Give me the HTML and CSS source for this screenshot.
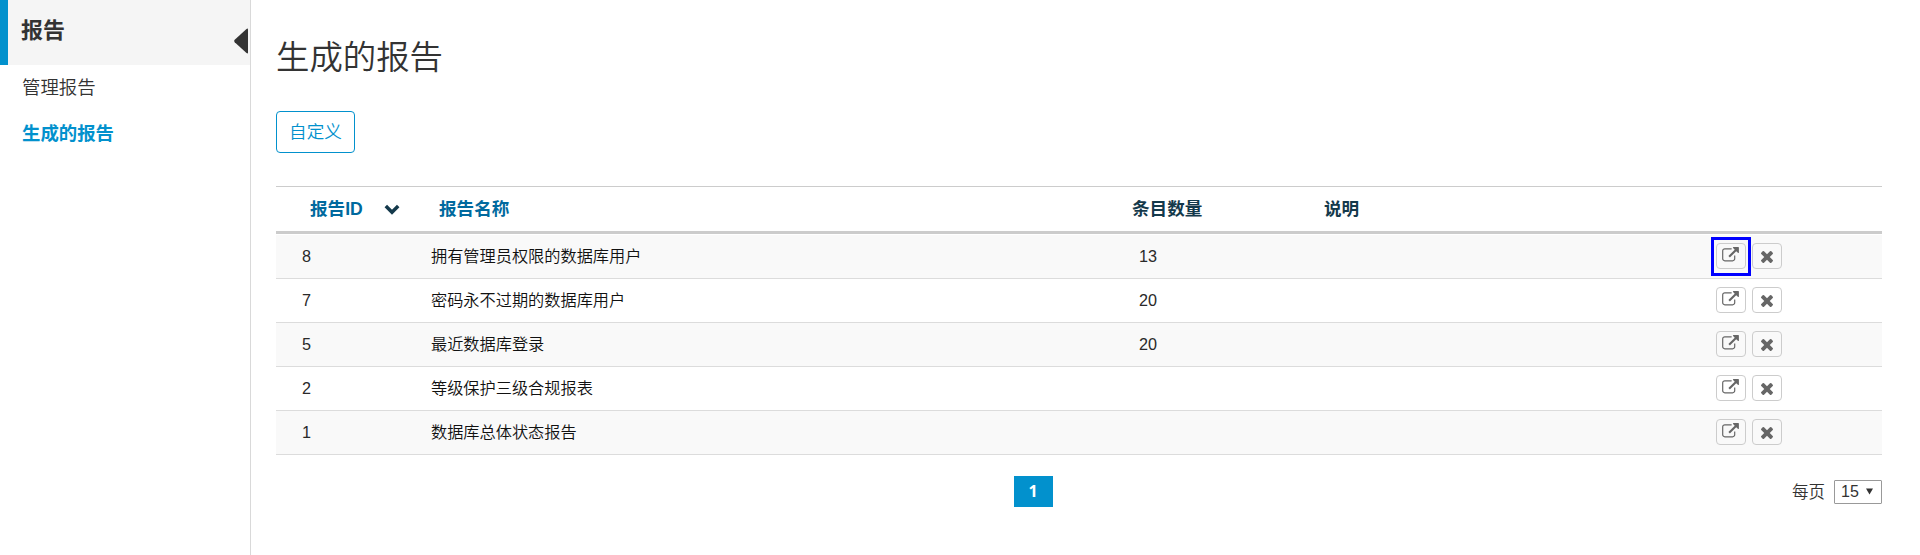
FILE: index.html
```html
<!DOCTYPE html>
<html lang="zh-CN">
<head>
<meta charset="utf-8">
<title>生成的报告</title>
<link rel="stylesheet" href="styles.css">
</head>
<body>
<svg class="defs" aria-hidden="true">
  <symbol id="open" viewBox="0 0 1792 1600"><path d="M1408 928v320q0 119-84.5 203.5t-203.5 84.5h-832q-119 0-203.5-84.5t-84.5-203.5v-832q0-119 84.5-203.5t203.5-84.5h704q14 0 23 9t9 23v64q0 14-9 23t-23 9h-704q-66 0-113 47t-47 113v832q0 66 47 113t113 47h832q66 0 113-47t47-113v-320q0-14 9-23t23-9h64q14 0 23 9t9 23zm384-864v512q0 26-19 45t-45 19-45-19l-176-176-652 652q-10 10-23 10t-23-10l-114-114q-10-10-10-23t10-23l652-652-176-176q-19-19-19-45t19-45 45-19h512q26 0 45 19t19 45z"/></symbol>
  <symbol id="remove" viewBox="302 366 1188 1188"><path d="M1490 1322q0 40-28 68l-136 136q-28 28-68 28t-68-28l-294-294-294 294q-28 28-68 28t-68-28l-136-136q-28-28-28-68t28-68l294-294-294-294q-28-28-28-68t28-68l136-136q28-28 68-28t68 28l294 294 294-294q28-28 68-28t68 28l136 136q28 28 28 68t-28 68l-294 294 294 294q28 28 28 68z"/></symbol>
</svg>
<div class="app">
  <aside class="sidebar">
    <div class="sidebar-head">
      <h2 class="sidebar-title">报告</h2>
      <svg class="collapse" viewBox="0 0 14 26"><path d="M14 1.500V24.500Q14 26 12.500 25L.7 14.200Q-.3 13 .7 11.800L12.500 1Q14 0 14 1.500z"/></svg>
    </div>
    <nav class="menu">
      <a class="menu-item">管理报告</a>
      <a class="menu-item active">生成的报告</a>
    </nav>
  </aside>
  <main class="content">
    <h1 class="title">生成的报告</h1>
    <button class="customize">自定义</button>
    <div class="table">
      <div class="row head">
        <div class="cell id link"><span class="id-label">报告ID</span><svg class="sort" viewBox="0 0 16 11"><path d="M1.800 2 8 8.200 14.200 2"/></svg></div>
        <div class="cell link">报告名称</div>
        <div class="cell count">条目数量</div>
        <div class="cell">说明</div>
        <div class="cell"></div>
      </div>
      <div class="row odd">
        <div class="cell id">8</div><div class="cell">拥有管理员权限的数据库用户</div><div class="cell count">13</div><div class="cell"></div>
        <div class="cell actions"><span class="action marked"><svg class="open"><use href="#open"/></svg></span><span class="action"><svg class="remove"><use href="#remove"/></svg></span></div>
      </div>
      <div class="row">
        <div class="cell id">7</div><div class="cell">密码永不过期的数据库用户</div><div class="cell count">20</div><div class="cell"></div>
        <div class="cell actions"><span class="action"><svg class="open"><use href="#open"/></svg></span><span class="action"><svg class="remove"><use href="#remove"/></svg></span></div>
      </div>
      <div class="row odd">
        <div class="cell id">5</div><div class="cell">最近数据库登录</div><div class="cell count">20</div><div class="cell"></div>
        <div class="cell actions"><span class="action"><svg class="open"><use href="#open"/></svg></span><span class="action"><svg class="remove"><use href="#remove"/></svg></span></div>
      </div>
      <div class="row">
        <div class="cell id">2</div><div class="cell">等级保护三级合规报表</div><div class="cell count"></div><div class="cell"></div>
        <div class="cell actions"><span class="action"><svg class="open"><use href="#open"/></svg></span><span class="action"><svg class="remove"><use href="#remove"/></svg></span></div>
      </div>
      <div class="row odd">
        <div class="cell id">1</div><div class="cell">数据库总体状态报告</div><div class="cell count"></div><div class="cell"></div>
        <div class="cell actions"><span class="action"><svg class="open"><use href="#open"/></svg></span><span class="action"><svg class="remove"><use href="#remove"/></svg></span></div>
      </div>
    </div>
    <div class="pager">
      <span class="page">1</span>
      <div class="per-page"><span class="per-label">每页</span><span class="select">15<svg class="caret" viewBox="0 0 8 7"><path d="M0 0h8L4 7z"/></svg></span></div>
    </div>
  </main>
</div>
</body>
</html>
```
FILE: styles.css
```css
*, *::after { box-sizing: border-box; }
body {
  margin: 0;
  background: #fff;
  color: #333;
  font-family: "Liberation Sans", "Noto Sans CJK SC", sans-serif;
}
.defs { display: none; }
.app { display: flex; height: 555px; overflow: hidden; }

.sidebar { flex: none; width: 251px; border-right: 1px solid #d9d9d9; }
.sidebar-head {
  display: flex;
  justify-content: space-between;
  height: 65px;
  padding: 0 2px 0 13px;
  border-left: 8px solid #0291cd;
  background: #f5f5f5;
}
.sidebar-title { margin: 0; font-size: 22px; line-height: 62px; font-weight: 700; }
.collapse { width: 14px; height: 26px; margin-top: 28px; fill: #333; }
.menu { display: flex; flex-direction: column; }
.menu-item { height: 46px; padding-left: 22px; font-size: 18.400px; line-height: 46px; font-weight: 350; }
.menu-item.active { color: #0291cd; font-weight: 700; }

.content { flex: 1; padding: 0 38px 0 25px; }
.title { height: 111px; margin: 0; font-size: 33.400px; line-height: 115px; font-weight: 350; }
.customize {
  display: block;
  width: 79px;
  height: 42px;
  padding: 0;
  border: 1px solid #0291cd;
  border-radius: 4px;
  background: #fff;
  color: #0291cd;
  font: 350 17.600px/38px "Liberation Sans", "Noto Sans CJK SC", sans-serif;
}
.table { margin-top: 33px; border-top: 1px solid #ccc; }
.row {
  display: grid;
  grid-template-columns: 147px 685px 200px 400px 1fr;
  height: 44px;
  border-bottom: 1px solid #dcdcdc;
  color: #111;
  font-size: 16.200px;
  line-height: 43px;
  font-weight: 350;
}
.row.odd { background: #f9f9f9; }
.row.head {
  height: 47px;
  border-bottom: 3px solid #ccc;
  margin-bottom: 1px;
  color: #14394b;
  font-size: 17.600px;
  line-height: 44px;
  font-weight: 700;
}
.cell { padding-left: 8px; white-space: nowrap; }
.cell.id { padding-left: 26px; }
.cell.count { padding-left: 31px; }
.row:not(.head) .id, .row:not(.head) .count { color: #2a2a2a; }
.head .cell { padding-left: 16px; }
.head .cell.id { display: flex; align-items: center; padding-left: 34px; }
.head .cell.count { padding-left: 24px; }
.link { color: #00699e; }
.id-label { width: 74px; }
.sort { width: 16px; height: 11px; fill: none; stroke: #14394b; stroke-width: 3.500px; }

.actions { display: flex; align-items: center; gap: 6px; padding-bottom: 1px; }
.action {
  position: relative;
  display: flex;
  align-items: center;
  justify-content: center;
  width: 30px;
  height: 26px;
  border: 1px solid #ccc;
  border-radius: 4px;
}
.action.marked::after {
  content: "";
  position: absolute;
  left: -6px;
  top: -7px;
  width: 40px;
  height: 39px;
  border: 3px solid #00f;
}
.open { width: 17px; height: 15px; margin: -3px 1px 0 0; fill: #666; }
.remove { width: 12px; height: 12px; margin: 2px 0 0 0; fill: #666; }

.pager { display: grid; grid-template-columns: 1fr 39px 1fr; align-items: center; margin-top: 20px; height: 33px; }
.page {
  grid-column: 2;
  align-self: start;
  margin: 1px 46px 0 -46px;
  height: 31px;
  background: #0291cd;
  color: #fff;
  font: 700 16px/31px "Open Sans", sans-serif;
  text-align: center;
}
.per-page { display: flex; justify-content: flex-end; align-items: center; gap: 9px; font-size: 16.500px; font-weight: 350; }
.per-label { margin-top: -2px; }
.select {
  display: flex;
  align-items: center;
  gap: 7px;
  width: 48px;
  height: 24px;
  padding-left: 6px;
  border: 1px solid #999;
  border-radius: 1px;
  font-size: 16px;
}
.caret { width: 7px; height: 7px; fill: #333; }
```
